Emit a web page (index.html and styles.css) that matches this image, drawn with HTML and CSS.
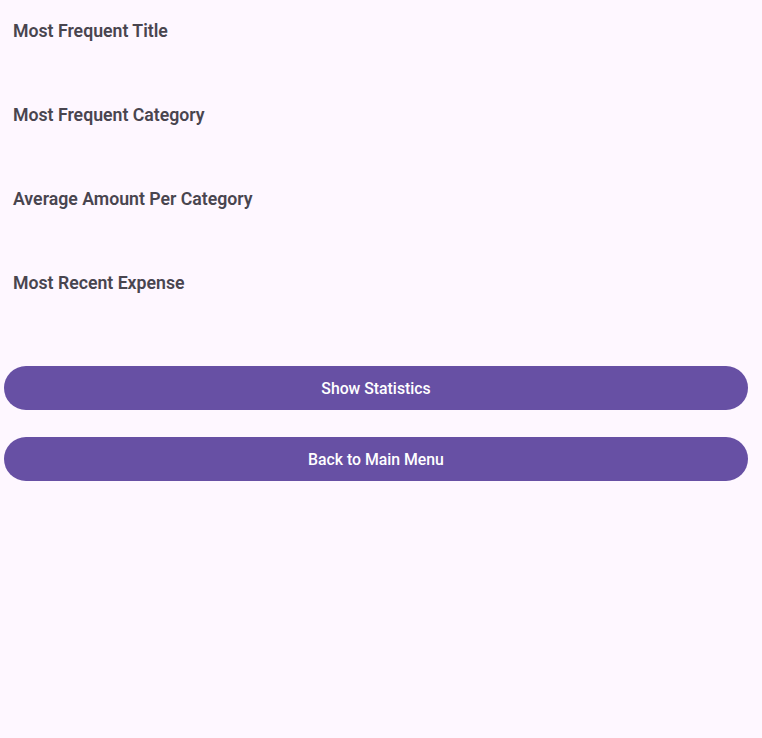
FILE: index.html
```html
<!DOCTYPE html>
<html>
<head>
<meta charset="utf-8">
<link rel="stylesheet" href="styles.css">
</head>
<body>
<div class="screen">
  <div class="stats">
    <div class="stat"><h2 class="stat-title">Most Frequent Title</h2></div>
    <div class="stat"><h2 class="stat-title">Most Frequent Category</h2></div>
    <div class="stat"><h2 class="stat-title">Average Amount Per Category</h2></div>
    <div class="stat"><h2 class="stat-title">Most Recent Expense</h2></div>
  </div>
  <div class="actions">
    <button class="btn">Show Statistics</button>
    <button class="btn">Back to Main Menu</button>
  </div>
</div>
</body>
</html>
```
FILE: styles.css
```css
html, body {
  margin: 0;
  padding: 0;
  background: #fef7ff;
  height: 100%;
}
body {
  font-family: Roboto, "Noto Sans", sans-serif;
}
.screen {
  padding: 20px 14px 0 4px;
}
.stats {
  display: flex;
  flex-direction: column;
  padding-left: 9px;
}
.stat {
  height: 84px;
}
.stat-title {
  margin: 0;
  font-size: 17.7px;
  line-height: 22px;
  font-weight: 600;
  color: #49454f;
}
.actions {
  display: flex;
  flex-direction: column;
  gap: 27px;
  margin-top: 10px;
}
.btn {
  height: 44px;
  border: none;
  border-radius: 22px;
  background: #6750a4;
  color: #ffffff;
  font-family: Roboto, "Noto Sans", sans-serif;
  font-size: 15.8px;
  font-weight: 500;
  padding: 0;
}
```
